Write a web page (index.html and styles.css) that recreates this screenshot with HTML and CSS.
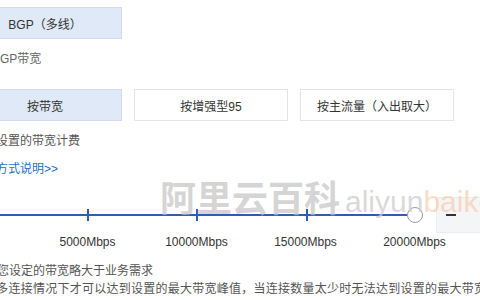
FILE: index.html
```html
<!DOCTYPE html>
<html lang="zh-CN">
<head>
<meta charset="utf-8">
<link rel="stylesheet" href="styles.css">
</head>
<body>
<div class="page">
  <div class="opts">
    <div class="opt active">BGP（多线）</div>
  </div>
  <div class="field-label">BGP带宽</div>
  <div class="opts gap-top">
    <div class="opt active">按带宽</div>
    <div class="opt">按增强型95</div>
    <div class="opt">按主流量（入出取大）</div>
  </div>
  <div class="hint">按设置的带宽计费</div>
  <a class="link" href="#">计费方式说明&gt;&gt;</a>
  <div class="slider-row">
    <div class="seg first"></div>
    <div class="seg"></div>
    <div class="seg wide"></div>
    <div class="seg last"></div>
    <div class="knob"></div>
    <div class="stepper"><span class="minus"></span></div>
  </div>
  <div class="scale">
    <span>5000Mbps</span>
    <span>10000Mbps</span>
    <span>15000Mbps</span>
    <span>20000Mbps</span>
  </div>
  <p class="note n1">建议您设定的带宽略大于业务需求</p>
  <p class="note n2">在多连接情况下才可以达到设置的最大带宽峰值，当连接数量太少时无法达到设置的最大带宽峰值。</p>
  <div class="watermark"><span class="wm-cn">阿里云百科</span><span class="wm-en">aliyun</span><span class="wm-or">baike</span></div>
</div>
</body>
</html>
```

FILE: styles.css
```css
html, body {
  margin: 0;
  padding: 0;
  background: #ffffff;
  overflow: hidden;
}

body {
  font-family: "Liberation Sans", "Noto Sans CJK SC", sans-serif;
  color: #333333;
  font-size: 12px;
}

.page {
  position: relative;
  margin-left: -32px;
  padding-top: 7px;
  width: 560px;
}

.opts {
  display: flex;
  gap: 12px;
}

.gap-top {
  margin-top: 20px;
}

.opt {
  box-sizing: border-box;
  width: 154px;
  height: 32px;
  display: flex;
  align-items: center;
  justify-content: center;
  border: 1px solid #e4e4e4;
  background: #ffffff;
  color: #333333;
  font-size: 12px;
}

.opt.active {
  background: #dfe9f7;
  border-color: #cfdcee;
}

.field-label {
  margin-top: 10px;
  padding-left: 24px;
  line-height: 20px;
  color: #666666;
  font-size: 12px;
}

.hint {
  margin-top: 10px;
  padding-left: 16px;
  line-height: 20px;
  color: #555555;
}

.link {
  display: block;
  margin-top: 8px;
  padding-left: 4px;
  line-height: 20px;
  color: #1f6cc9;
  text-decoration: none;
}

.slider-row {
  display: flex;
  align-items: center;
  margin-top: 18px;
  height: 36px;
}

.seg {
  box-sizing: border-box;
  height: 12px;
  width: 109px;
  border-right: 2px solid #2d5fae;
  background: linear-gradient(to bottom, transparent 5px, #2d5fae 5px, #2d5fae 7px, transparent 7px);
}

.seg.first {
  width: 121px;
}

.seg.wide {
  width: 110px;
}

.seg.last {
  width: 99px;
  border-right: none;
}

.knob {
  box-sizing: border-box;
  width: 16px;
  height: 16px;
  border: 1px solid #9a9a9a;
  border-radius: 50%;
  background: #ffffff;
}

.stepper {
  box-sizing: border-box;
  margin-left: 13px;
  width: 50px;
  height: 36px;
  background: #f4f5f7;
  border: 1px solid #ececec;
  display: flex;
  align-items: center;
  padding-left: 9px;
}

.minus {
  display: block;
  width: 10px;
  height: 1.5px;
  background: #333333;
}

.scale {
  display: flex;
  margin-top: 1px;
  padding-left: 65px;
  line-height: 16px;
}

.scale span {
  width: 109px;
  text-align: center;
}

.note {
  margin: 0;
  line-height: 18px;
  color: #555555;
  white-space: nowrap;
}

.n1 {
  margin-top: 12px;
  padding-left: 5px;
}

.n2 {
  padding-left: 16px;
  letter-spacing: 0.25px;
}

.watermark {
  position: absolute;
  left: 192px;
  top: 178px;
  white-space: nowrap;
  line-height: 36px;
  pointer-events: none;
}

.wm-cn {
  font-family: "Noto Sans CJK SC", sans-serif;
  font-size: 36px;
  font-weight: 700;
  color: rgba(195, 195, 195, 0.7);
}

.wm-en,
.wm-or {
  font-family: "Liberation Sans", sans-serif;
  font-size: 30px;
}

.wm-en {
  margin-left: 5px;
  color: rgba(205, 205, 205, 0.75);
}

.wm-or {
  color: rgba(247, 205, 170, 0.7);
}
```
